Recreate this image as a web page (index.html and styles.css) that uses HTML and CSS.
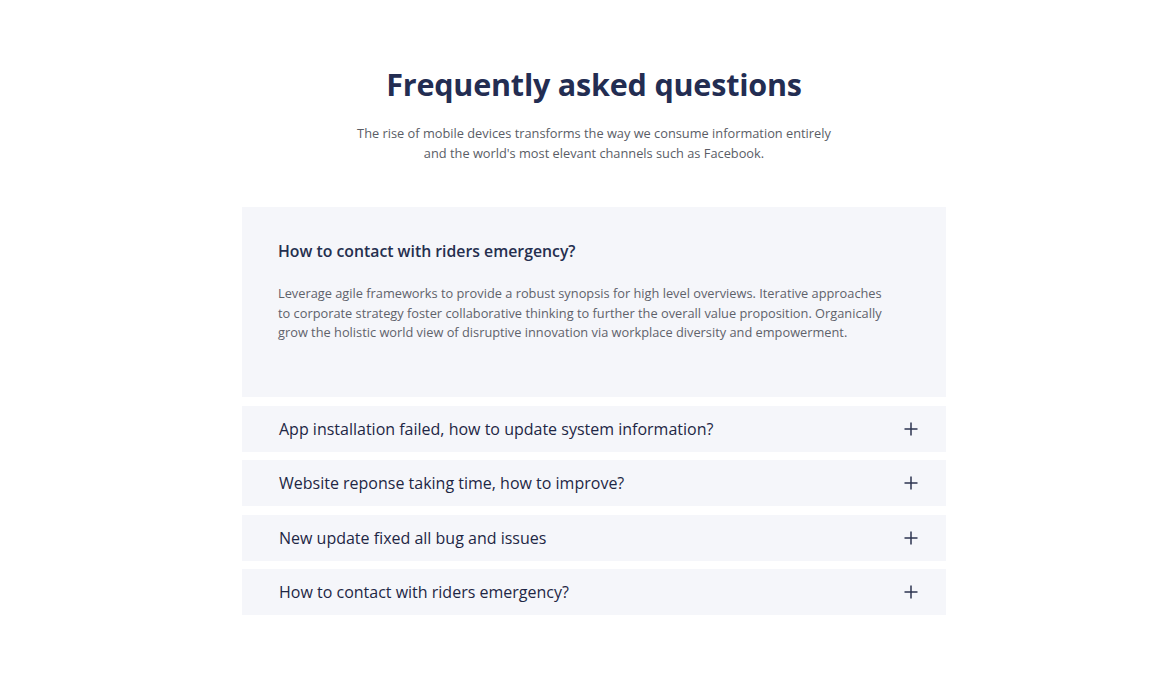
FILE: index.html
```html
<!DOCTYPE html>
<html lang="en">
<head>
<meta charset="utf-8">
<title>FAQ</title>
<link rel="stylesheet" href="styles.css">
</head>
<body>
<section class="faq">
  <h1 class="faq-title">Frequently asked questions</h1>
  <p class="faq-sub">The rise of mobile devices transforms the way we consume information entirely<br>and the world's most elevant channels such as Facebook.</p>
  <div class="faq-list">
    <div class="item open">
      <h3 class="item-q">How to contact with riders emergency?</h3>
      <p class="item-a">Leverage agile frameworks to provide a robust synopsis for high level overviews. Iterative approaches to corporate strategy foster collaborative thinking to further the overall value proposition. Organically grow the holistic world view of disruptive innovation via workplace diversity and empowerment.</p>
    </div>
    <div class="item">
      <span class="item-q">App installation failed, how to update system information?</span>
      <svg class="plus" width="14" height="14" viewBox="0 0 14 14"><path d="M7 0.5V13.5M0.5 7H13.5" stroke="#2c3550" stroke-width="1.5"/></svg>
    </div>
    <div class="item">
      <span class="item-q">Website reponse taking time, how to improve?</span>
      <svg class="plus" width="14" height="14" viewBox="0 0 14 14"><path d="M7 0.5V13.5M0.5 7H13.5" stroke="#2c3550" stroke-width="1.5"/></svg>
    </div>
    <div class="item">
      <span class="item-q">New update fixed all bug and issues</span>
      <svg class="plus" width="14" height="14" viewBox="0 0 14 14"><path d="M7 0.5V13.5M0.5 7H13.5" stroke="#2c3550" stroke-width="1.5"/></svg>
    </div>
    <div class="item">
      <span class="item-q">How to contact with riders emergency?</span>
      <svg class="plus" width="14" height="14" viewBox="0 0 14 14"><path d="M7 0.5V13.5M0.5 7H13.5" stroke="#2c3550" stroke-width="1.5"/></svg>
    </div>
  </div>
</section>
</body>
</html>
```
FILE: styles.css
```css
* { box-sizing: border-box; }
body {
  margin: 0;
  padding-left: 14px;
  background: #ffffff;
  font-family: "Open Sans", "Liberation Sans", sans-serif;
  color: #252f4f;
}
.faq {
  width: 704px;
  margin: 0 auto;
  padding-top: 62px;
  display: flex;
  flex-direction: column;
  align-items: center;
}
.faq-title {
  margin: 0;
  font-size: 30.5px;
  line-height: 44px;
  font-weight: 700;
  color: #232d52;
  letter-spacing: -0.2px;
}
.faq-sub {
  margin: 17px 0 0;
  text-align: center;
  font-size: 12.8px;
  line-height: 20px;
  color: #5a5d66;
}
.faq-list {
  margin-top: 44px;
  width: 100%;
  display: flex;
  flex-direction: column;
  gap: 8.6px;
}
.item {
  background: #f5f6fa;
  height: 46px;
  padding: 0 28px 0 37px;
  display: flex;
  align-items: center;
  justify-content: space-between;
}
.item .item-q {
  font-size: 16px;
  font-weight: 500;
  color: #1e2745;
}
.item.open {
  height: 190px;
  display: block;
  padding: 33px 60px 0 36px;
}
.item.open .item-q {
  margin: 0;
  font-size: 15.8px;
  line-height: 22px;
  font-weight: 600;
  color: #252f4f;
}
.item-a {
  margin: 22px 0 0;
  max-width: 612px;
  font-size: 12.8px;
  line-height: 19.5px;
  color: #5f626b;
}
.plus { flex: none; }
```
